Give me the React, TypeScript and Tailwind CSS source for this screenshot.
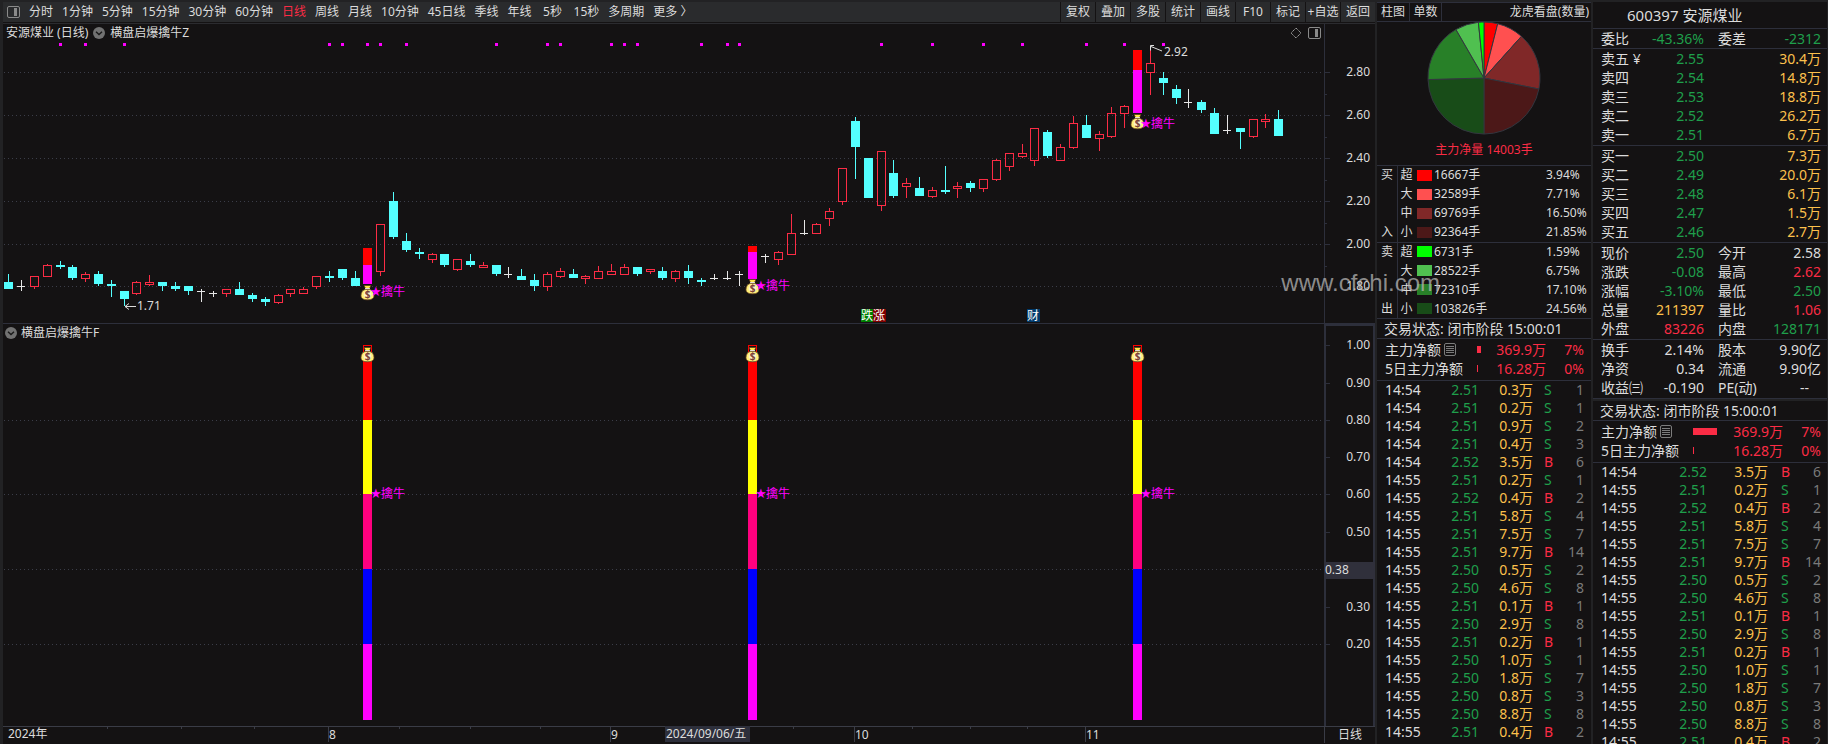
import type { ReactNode } from 'react';
import clsx from 'clsx';

type Kind = 'up' | 'down' | 'flat' | 'signal';
// kind, high, body top, body bottom, low
type Candle = [Kind, number, number, number, number];

const PERIODS = [
  '分时', '1分钟', '5分钟', '15分钟', '30分钟', '60分钟', '日线', '周线', '月线',
  '10分钟', '45日线', '季线', '年线', '5秒', '15秒', '多周期', '更多 〉',
];
const TOOLS = ['复权', '叠加', '多股', '统计', '画线', 'F10', '标记', '+自选', '返回'];

const CANDLES: Candle[] = [
  ['down', 274, 282, 289, 289], ['flat', 280, 286, 287, 291], ['up', 276, 276, 287, 289],
  ['up', 264, 265, 277, 277], ['down', 261, 265, 267, 269], ['down', 265, 267, 278, 280],
  ['up', 272, 274, 279, 282], ['down', 271, 274, 284, 286], ['down', 280, 284, 286, 297],
  ['down', 291, 291, 299, 306], ['up', 281, 282, 294, 295], ['up', 275, 282, 285, 286],
  ['down', 282, 282, 286, 291], ['down', 282, 286, 289, 291], ['down', 286, 286, 291, 295],
  ['flat', 289, 291, 292, 302], ['flat', 291, 293, 294, 297], ['up', 289, 289, 294, 297],
  ['down', 282, 289, 295, 295], ['down', 293, 295, 299, 302], ['down', 297, 299, 302, 306],
  ['up', 294, 295, 303, 304], ['up', 289, 289, 294, 297], ['up', 287, 289, 294, 294],
  ['up', 276, 276, 287, 289], ['down', 271, 276, 278, 282], ['down', 269, 269, 278, 280],
  ['down', 271, 278, 286, 286], ['signal', 248, 265, 284, 284], ['up', 224, 224, 272, 276],
  ['down', 192, 201, 237, 239], ['down', 233, 241, 250, 252], ['down', 248, 252, 254, 259],
  ['up', 253, 254, 260, 263], ['down', 254, 254, 265, 267], ['up', 259, 259, 270, 271],
  ['down', 254, 261, 265, 267], ['up', 262, 265, 268, 268], ['down', 265, 265, 274, 276],
  ['flat', 267, 274, 275, 278], ['down', 269, 276, 280, 280], ['down', 274, 280, 286, 291],
  ['up', 272, 274, 287, 291], ['up', 268, 271, 277, 278], ['down', 269, 274, 278, 278],
  ['up', 275, 276, 279, 284], ['up', 266, 271, 279, 279], ['up', 264, 271, 275, 275],
  ['up', 264, 267, 275, 275], ['down', 267, 267, 274, 276], ['up', 269, 269, 272, 274],
  ['down', 267, 271, 278, 280], ['up', 270, 271, 279, 282], ['down', 265, 271, 278, 284],
  ['down', 278, 280, 282, 286], ['flat', 274, 278, 279, 280], ['flat', 271, 278, 279, 280],
  ['flat', 271, 274, 275, 286], ['signal', 246, 252, 279, 279], ['flat', 254, 256, 257, 263],
  ['up', 251, 252, 260, 265], ['up', 214, 233, 255, 255], ['flat', 220, 233, 234, 235],
  ['up', 223, 224, 234, 234], ['up', 208, 211, 219, 226], ['up', 168, 168, 202, 205],
  ['down', 117, 121, 147, 179], ['down', 158, 158, 198, 198], ['up', 151, 151, 206, 211],
  ['down', 160, 173, 196, 198], ['up', 178, 183, 187, 198], ['down', 177, 188, 196, 196],
  ['up', 187, 190, 197, 198], ['down', 166, 190, 192, 194], ['up', 182, 186, 189, 198],
  ['down', 181, 183, 188, 192], ['up', 179, 179, 189, 192], ['up', 159, 160, 180, 181],
  ['up', 153, 153, 167, 171], ['up', 144, 153, 157, 158], ['up', 128, 128, 161, 166],
  ['down', 130, 132, 156, 158], ['up', 144, 147, 161, 161], ['up', 116, 123, 148, 149],
  ['down', 115, 125, 138, 138], ['up', 131, 134, 139, 151], ['up', 107, 113, 137, 138],
  ['up', 105, 106, 114, 128], ['signal', 50, 70, 113, 113], ['up', 49, 63, 73, 95],
  ['down', 72, 78, 83, 95], ['down', 85, 89, 98, 104], ['flat', 89, 102, 103, 108],
  ['down', 100, 102, 110, 113], ['down', 108, 113, 134, 134], ['flat', 115, 130, 131, 134],
  ['down', 128, 128, 132, 149], ['up', 119, 119, 137, 138], ['up', 114, 119, 122, 128],
  ['down', 110, 119, 136, 136],
];

const DOTS = [4, 6, 9, 25, 26, 28, 29, 31, 38, 42, 43, 47, 48, 49, 54, 56, 57, 68, 72, 76, 79, 84, 87, 90];
const SIGNALS = [28, 58, 88];

const PRICE_AXIS: [string, number][] = [
  ['2.80', 72], ['2.60', 115], ['2.40', 158], ['2.20', 201], ['2.00', 244], ['1.80', 286],
];
const RATIO_AXIS: [string, number][] = [
  ['1.00', 345], ['0.90', 383], ['0.80', 420], ['0.70', 457], ['0.60', 494],
  ['0.50', 532], ['0.30', 607], ['0.20', 644],
];
const SEGMENTS: [number, number, string][] = [
  [345, 420, '#ff0000'], [420, 494, '#ffff00'], [494, 569, '#ff007f'],
  [569, 644, '#0000ff'], [644, 720, '#ff00ff'],
];

const BUY_FLOW: string[][] = [
  ['买', '超', '#ff0000', '16667手', '3.94%'],
  ['', '大', '#ff5050', '32589手', '7.71%'],
  ['', '中', '#802828', '69769手', '16.50%'],
  ['入', '小', '#4c1818', '92364手', '21.85%'],
];
const SELL_FLOW: string[][] = [
  ['卖', '超', '#00ff00', '6731手', '1.59%'],
  ['', '大', '#50c050', '28522手', '6.75%'],
  ['', '中', '#288028', '72310手', '17.10%'],
  ['出', '小', '#184c18', '103826手', '24.56%'],
];

const TICKS: string[][] = [
  ['14:54', '2.51', '0.3万', 'S', '1'],
  ['14:54', '2.51', '0.2万', 'S', '1'],
  ['14:54', '2.51', '0.9万', 'S', '2'],
  ['14:54', '2.51', '0.4万', 'S', '3'],
  ['14:54', '2.52', '3.5万', 'B', '6'],
  ['14:55', '2.51', '0.2万', 'S', '1'],
  ['14:55', '2.52', '0.4万', 'B', '2'],
  ['14:55', '2.51', '5.8万', 'S', '4'],
  ['14:55', '2.51', '7.5万', 'S', '7'],
  ['14:55', '2.51', '9.7万', 'B', '14'],
  ['14:55', '2.50', '0.5万', 'S', '2'],
  ['14:55', '2.50', '4.6万', 'S', '8'],
  ['14:55', '2.51', '0.1万', 'B', '1'],
  ['14:55', '2.50', '2.9万', 'S', '8'],
  ['14:55', '2.51', '0.2万', 'B', '1'],
  ['14:55', '2.50', '1.0万', 'S', '1'],
  ['14:55', '2.50', '1.8万', 'S', '7'],
  ['14:55', '2.50', '0.8万', 'S', '3'],
  ['14:55', '2.50', '8.8万', 'S', '8'],
  ['14:55', '2.51', '0.4万', 'B', '2'],
];

const G = 'text-[#1f9f4b]';
const R = 'text-[#fb2c45]';
const Y = 'text-[#fcc04c]';
const W = 'text-[#dcdcdc]';

type QuoteRow = [string, string, string, string, string, string];

const SELL_ROWS: QuoteRow[] = [
  ['卖五 ¥', '2.55', G, '', '30.4万', Y],
  ['卖四', '2.54', G, '', '14.8万', Y],
  ['卖三', '2.53', G, '', '18.8万', Y],
  ['卖二', '2.52', G, '', '26.2万', Y],
  ['卖一', '2.51', G, '', '6.7万', Y],
];
const BUY_ROWS: QuoteRow[] = [
  ['买一', '2.50', G, '', '7.3万', Y],
  ['买二', '2.49', G, '', '20.0万', Y],
  ['买三', '2.48', G, '', '6.1万', Y],
  ['买四', '2.47', G, '', '1.5万', Y],
  ['买五', '2.46', G, '', '2.7万', Y],
];
const PRICE_ROWS: QuoteRow[] = [
  ['现价', '2.50', G, '今开', '2.58', W],
  ['涨跌', '-0.08', G, '最高', '2.62', R],
  ['涨幅', '-3.10%', G, '最低', '2.50', G],
  ['总量', '211397', Y, '量比', '1.06', R],
  ['外盘', '83226', R, '内盘', '128171', G],
];
const BASE_ROWS: QuoteRow[] = [
  ['换手', '2.14%', W, '股本', '9.90亿', W],
  ['净资', '0.34', W, '流通', '9.90亿', W],
  ['收益㈢', '-0.190', W, 'PE(动)', '--', W],
];

const barLeft = (i: number) => Math.round(4.2 + i * 12.828);

function PanelIcon({ className }: { className?: string }) {
  return (
    <svg width="13" height="12" viewBox="0 0 13 12" className={className} aria-hidden="true">
      <rect x="0.5" y="0.5" width="12" height="11" rx="1.5" fill="none" stroke="#8a8a8a" />
      <rect x="7" y="2" width="3" height="8" fill="#8a8a8a" />
    </svg>
  );
}

function ChevronDot() {
  return (
    <svg width="12" height="12" viewBox="0 0 12 12" aria-hidden="true">
      <circle cx="6" cy="6" r="6" fill="#727272" />
      <path d="M3 4.8 6 7.6 9 4.8" fill="none" stroke="#1a1a1a" strokeWidth="1.4" />
    </svg>
  );
}

function ListIcon() {
  return (
    <svg width="12" height="13" viewBox="0 0 12 13" className="shrink-0" aria-hidden="true">
      <rect x="0.5" y="0.5" width="11" height="12" rx="1.5" fill="none" stroke="#7c7c7c" />
      <path d="M2 3.5h8M2 5.5h8M2 7.5h8M2 9.5h8" stroke="#7c7c7c" />
    </svg>
  );
}

function MoneyBag({ x, y }: { x: number; y: number }) {
  return (
    <g transform={`translate(${x} ${y})`}>
      <path d="M-3.5 0.5 3.5 0.5 2 3.5 -2 3.5Z" fill="#ffe94a" stroke="#5a3018" strokeWidth="0.7" />
      <path d="M-2.4 3.6h4.8" stroke="#fff" strokeWidth="1.2" />
      <path
        d="M-2 4.3C-5 5-6.5 7.8-6.5 10.4-6.5 13.4-4 14.8 0 14.8s6.5-1.4 6.5-4.4C6.5 7.8 5 5 2 4.3Z"
        fill="#fff07a"
        stroke="#6b4420"
        strokeWidth="0.8"
      />
      <ellipse cx="0" cy="9.2" rx="3.8" ry="3.8" fill="#fdf3c8" />
      <text x="0" y="13" textAnchor="middle" fontSize="10" fontWeight="700" fill="#7b4238">$</text>
    </g>
  );
}

function SignalText({ x, y }: { x: number; y: number }) {
  return (
    <g fill="#ff00ff">
      <text x={x - 1} y={y} fontSize="13" fontFamily="DejaVu Sans, sans-serif">★</text>
      <text x={x + 10} y={y} fontSize="12">擒牛</text>
    </g>
  );
}

function GridLine({ y }: { y: number }) {
  return <path d={`M4 ${y}.5H1322`} stroke="#3b3d48" strokeDasharray="1 3" />;
}

function CandleShape({ candle, index }: { candle: Candle; index: number }) {
  const [kind, high, top, bottom, low] = candle;
  const x = barLeft(index);
  if (kind === 'signal') {
    return (
      <>
        <rect x={x} y={high} width="9" height={top - high} fill="#ff0000" />
        <rect x={x} y={top} width="9" height={bottom - top} fill="#ff00ff" />
      </>
    );
  }
  if (kind === 'up') {
    return (
      <g stroke="#fb2c45" fill="none">
        <rect x={x + 0.5} y={top + 0.5} width="8" height={bottom - top - 1} />
        <path d={`M${x + 4.5} ${high}V${top}M${x + 4.5} ${bottom}V${low}`} />
      </g>
    );
  }
  const fill = kind === 'down' ? '#54ffff' : '#e6e6e6';
  return (
    <g fill={fill}>
      <rect x={x + 4} y={high} width="1" height={low - high} />
      <rect x={x} y={top} width={kind === 'down' ? 9 : 8} height={bottom - top} />
    </g>
  );
}

function PriceChart() {
  return (
    <svg viewBox="3 42 1372 281" className="block w-full" fontSize="12" fill="#dcdcdc" shapeRendering="crispEdges">
      {PRICE_AXIS.map(([, y]) => <GridLine key={y} y={y} />)}
      {DOTS.map((i) => (
        <rect key={i} x={barLeft(i) + 3} y="43" width="3" height="3" fill="#ff00ff" />
      ))}
      {CANDLES.map((c, i) => <CandleShape key={i} candle={c} index={i} />)}
      <g shapeRendering="auto">
        <path d="M125 306.5h11M129 303.5l-4 3 4 3" fill="none" stroke="#dcdcdc" />
        <text x="137" y="310">1.71</text>
        <path d="M1151 46.5l11 4.5M1154 45.5h-3.5v5" fill="none" stroke="#dcdcdc" />
        <text x="1164" y="56">2.92</text>
        <MoneyBag x={367.5} y={285} />
        <MoneyBag x={752.5} y={279} />
        <MoneyBag x={1137.5} y={114} />
        <SignalText x={371} y={296} />
        <SignalText x={756} y={290} />
        <SignalText x={1141} y={128} />
      </g>
      <rect x="861" y="309" width="12" height="13" fill="#007f00" />
      <rect x="873" y="309" width="13" height="13" fill="#7f0000" />
      <rect x="1027" y="309" width="13" height="13" fill="#003a6b" />
      <g fill="#ffffff">
        <text x="861" y="320">跌</text>
        <text x="873" y="320">涨</text>
        <text x="1027" y="320">财</text>
      </g>
      <path d="M1324.5 42V323" stroke="#2d2f3b" />
      {PRICE_AXIS.map(([label, y]) => (
        <g key={label}>
          <path d={`M1325 ${y}.5h5`} stroke="#2d2f3b" />
          {y < 286 && <path d={`M1325 ${y + 22}.5h2`} stroke="#2d2f3b" />}
          <text x="1370" y={y + 4} textAnchor="end">{label}</text>
        </g>
      ))}
    </svg>
  );
}

function RatioChart() {
  return (
    <svg
      viewBox="3 342 1372 384"
      className="block w-full overflow-visible"
      fontSize="12"
      fill="#dcdcdc"
      shapeRendering="crispEdges"
    >
      {[420, 494, 569, 644].map((y) => <GridLine key={y} y={y} />)}
      {SIGNALS.map((i) => (
        <g key={i}>
          {SEGMENTS.map(([top, bottom, color]) => (
            <rect key={top} x={barLeft(i)} y={top} width="9" height={bottom - top} fill={color} />
          ))}
          <rect x={barLeft(i) + 1} y="346" width="7" height="16" fill="#141213" />
          <g shapeRendering="auto">
            <MoneyBag x={barLeft(i) + 4.5} y={347} />
            <SignalText x={barLeft(i) + 8} y={498} />
          </g>
        </g>
      ))}
      <path d="M1325 342V726M1374 342V726" stroke="#2d2f3b" strokeWidth="2" />
      {RATIO_AXIS.map(([label, y]) => (
        <g key={label}>
          <path d={`M1326 ${y}.5h4`} stroke="#2d2f3b" />
          <text x="1370" y={y + 4} textAnchor="end">{label}</text>
        </g>
      ))}
      <rect x="1325" y="562" width="50" height="17" fill="#30303b" />
      <text x="1325" y="574">0.38</text>
    </svg>
  );
}

function TimeAxis() {
  const months: [string, number][] = [['8', 328], ['9', 610], ['10', 854], ['11', 1085]];
  return (
    <svg viewBox="3 726 1372 17" className="block w-full" fontSize="12" fill="#dcdcdc" shapeRendering="crispEdges">
      <path d="M3 726.5H1375M1324.5 726V743" stroke="#3a3c46" />
      {[107, 181, 254, 399, 470, 540, 793, 912, 970, 1027].map((x) => (
        <path key={x} d={`M${x}.5 727v2`} stroke="#3a3c46" />
      ))}
      <text x="8" y="738">2024年</text>
      {months.map(([label, x]) => (
        <g key={label}>
          <path d={`M${x}.5 727v15`} stroke="#3a3c46" />
          <text x={x + 1} y="739">{label}</text>
        </g>
      ))}
      <rect x="665" y="726" width="85" height="16" fill="#2d2f3b" />
      <text x="666" y="738">2024/09/06/五</text>
      <text x="1338" y="739">日线</text>
    </svg>
  );
}

function Toolbar() {
  return (
    <nav className="flex h-5 items-stretch justify-between overflow-hidden bg-[#2a2b2d] text-xs">
      <div className="flex items-center gap-[9px] pl-1">
        <button type="button" aria-label="侧栏">
          <PanelIcon />
        </button>
        {PERIODS.map((p) => (
          <button
            key={p}
            type="button"
            className={clsx('min-w-6 whitespace-nowrap text-center', p === '日线' ? 'text-[#fb2c45]' : 'text-[#dcdcdc]')}
          >
            {p}
          </button>
        ))}
      </div>
      <div className="flex">
        {TOOLS.map((t) => (
          <button key={t} type="button" className="w-[35px] whitespace-nowrap border-l border-[#141213] text-center">
            {t}
          </button>
        ))}
      </div>
    </nav>
  );
}

const SLICES = [...BUY_FLOW, ...[...SELL_FLOW].reverse()].map((r) => ({ color: r[2], value: parseFloat(r[4]) }));

function Pie() {
  const at = (pct: number) => {
    const a = (pct / 100) * Math.PI * 2;
    return `${56 + 56 * Math.sin(a)} ${56 - 56 * Math.cos(a)}`;
  };
  let sum = 0;
  return (
    <svg width="112" height="112" viewBox="0 0 112 112" className="mx-auto block overflow-visible" aria-hidden="true">
      {SLICES.map(({ color, value }) => {
        const from = sum;
        sum += value;
        return <path key={color} d={`M56 56L${at(from)}A56 56 0 0 1 ${at(sum)}Z`} fill={color} stroke="#33363f" />;
      })}
    </svg>
  );
}

function FlowTable({ rows }: { rows: string[][] }) {
  return (
    <table className="w-full table-fixed border-collapse border-t border-[#2d2f3b] text-xs">
      <tbody>
        {rows.map(([side, size, color, amount, pct]) => (
          <tr key={size} className="h-[19px]">
            <td className="w-5 border-r border-[#2d2f3b] p-0 pl-1">{side}</td>
            <td className="w-5 p-0 pl-[3px]">{size}</td>
            <td className="w-[17px] p-0">
              <span className="block h-[11px] w-[15px]" style={{ backgroundColor: color }} />
            </td>
            <td className="p-0">{amount}</td>
            <td className="w-[45px] p-0">{pct}</td>
          </tr>
        ))}
      </tbody>
    </table>
  );
}

function QuoteTable({ rows, className }: { rows: QuoteRow[]; className?: string }) {
  return (
    <div className={clsx('border-t border-[#2d2f3b] text-sm', className)}>
      <table className="w-full table-fixed border-collapse leading-[19px]">
        <tbody>
          {rows.map(([a, b, bc, c, d, dc]) => (
            <tr key={a} className="h-[19px] whitespace-nowrap">
              <td className="w-[56px] p-0 pl-2">{a}</td>
              <td className={clsx('w-[55px] p-0 text-right', bc)}>{b}</td>
              <td className="w-[55px] p-0 pl-[14px]">{c}</td>
              <td className={clsx('p-0 text-right', d === '--' ? 'pr-[18px]' : 'pr-[6px]', dc)}>{d}</td>
            </tr>
          ))}
        </tbody>
      </table>
    </div>
  );
}

function NetFlow({ wide }: { wide?: boolean }) {
  const row = (label: ReactNode, bar: string, amount: string, pct: string) => (
    <div className="flex h-[19px] items-center whitespace-nowrap pl-2">
      <span className="flex w-[92px] items-center gap-[3px]">{label}</span>
      <span className={clsx('h-[7px] bg-[#fb2c45]', bar)} />
      <span className={clsx('ml-auto text-right', R)}>{amount}</span>
      <span className={clsx('text-right', R, wide ? 'w-[44px] pr-[6px]' : 'w-[45px] pr-[7px]')}>{pct}</span>
    </div>
  );
  return (
    <div className="text-sm">
      <p className="h-[19px] whitespace-nowrap pl-[7px] leading-[19px]">交易状态: 闭市阶段 15:00:01</p>
      <div className="border-y border-[#2d2f3b] pt-px pb-[2px]">
        {row(<>主力净额<ListIcon /></>, wide ? 'w-6' : 'w-1', '369.9万', '7%')}
        {row('5日主力净额', 'w-px', '16.28万', '0%')}
      </div>
    </div>
  );
}

function TickTable({ ticks, wide }: { ticks: string[][]; wide?: boolean }) {
  return (
    <table className="w-full table-fixed border-collapse text-sm leading-[18px]">
      <tbody>
        {ticks.map(([time, price, amount, side, count], i) => (
          <tr key={i} className="h-[18px] whitespace-nowrap">
            <td className="w-[54px] p-0 pl-2">{time}</td>
            <td className={clsx('p-0 text-right', G, wide ? 'w-[60px]' : 'w-[48px]')}>{price}</td>
            <td className={clsx('p-0 text-right', Y, wide ? 'w-[61px]' : 'w-[54px]')}>{amount}</td>
            <td className={clsx('w-[24px] p-0', wide ? 'pl-[13px]' : 'pl-[11px]', side === 'B' ? R : G)}>{side}</td>
            <td className={clsx('p-0 text-right text-[#7a7a7a]', wide ? 'pr-[6px]' : 'pr-[7px]')}>{count}</td>
          </tr>
        ))}
      </tbody>
    </table>
  );
}

export default function App() {
  return (
    <div
      className="relative grid h-screen grid-cols-[minmax(0,1fr)_214px_234px] gap-x-[2px] overflow-hidden bg-[#222224] pt-[2px] pr-px pl-[3px] text-[#dcdcdc]"
      style={{ fontFamily: '"Noto Sans", "Noto Sans CJK SC", sans-serif' }}
    >
      {/* Charts */}
      <main className="overflow-hidden bg-[#141213]">
        <Toolbar />
        <header className="mt-px flex h-[19px] items-stretch border-t border-[#2b2b2f] text-xs">
          <div className="flex flex-1 items-center px-[3px]">
            <span>安源煤业 (日线)</span>
            <button type="button" aria-label="指标菜单" className="mx-[5px]"><ChevronDot /></button>
            <span>横盘启爆擒牛Z</span>
            <svg width="12" height="12" viewBox="0 0 12 12" className="mr-[6px] ml-auto" aria-hidden="true">
              <path d="M6 1 11 6 6 11 1 6Z" fill="none" stroke="#9a9a9a" strokeDasharray="1.5 0.5" />
            </svg>
            <PanelIcon />
          </div>
          <div className="w-[51px] border-l border-[#2d2f3b]" />
        </header>
        <PriceChart />
        <header className="flex h-[19px] items-stretch border-t border-[#2d2f3b] text-xs">
          <div className="flex flex-1 items-center pl-[2px]">
            <button type="button" aria-label="指标菜单" className="mr-1"><ChevronDot /></button>
            <span>横盘启爆擒牛F</span>
          </div>
          <div className="w-[51px] border-2 border-b-0 border-[#2d2f3b]" />
        </header>
        <RatioChart />
        <TimeAxis />
      </main>

      {/* Order flow */}
      <aside className="overflow-hidden bg-[#141213]">
        <div className="flex h-5 items-stretch border-y border-[#2d2f3b] text-xs">
          <button type="button" className="w-8">柱图</button>
          <button type="button" className="w-[33px] border-x border-[#2d2f3b]">单数</button>
          <span className="ml-auto flex items-center pr-[2px]">龙虎看盘(数量)</span>
        </div>
        <Pie />
        <p className={clsx('flex h-[31px] items-center justify-center text-xs', R)}>主力净量 14003手</p>
        <FlowTable rows={BUY_FLOW} />
        <FlowTable rows={SELL_FLOW} />
        <div className="border-t border-[#2d2f3b]">
          <NetFlow />
        </div>
        <TickTable ticks={TICKS} />
      </aside>

      {/* Quote */}
      <aside className="overflow-hidden bg-[#141213]">
        <h1 className="flex h-[26px] items-center pl-[34px] text-[15px]">600397 安源煤业</h1>
        <QuoteTable rows={[['委比', '-43.36%', G, '委差', '-2312', G]]} />
        <QuoteTable rows={SELL_ROWS} className="pb-px" />
        <QuoteTable rows={BUY_ROWS} className="pb-px" />
        <QuoteTable rows={PRICE_ROWS} className="pb-px" />
        <QuoteTable rows={BASE_ROWS} className="pb-px" />
        <div className="h-[3px] border-t border-[#2d2f3b] bg-[#222224]" />
        <NetFlow wide />
        <TickTable ticks={TICKS.slice(4)} wide />
      </aside>

      {/* Watermark */}
      <span
        className="pointer-events-none absolute top-[265px] right-[388px] text-[24px] leading-[36px] text-[#b4b4b4]/75"
        style={{ fontFamily: '"Liberation Sans", sans-serif' }}
      >
        www.cfchi.com
      </span>
    </div>
  );
}
